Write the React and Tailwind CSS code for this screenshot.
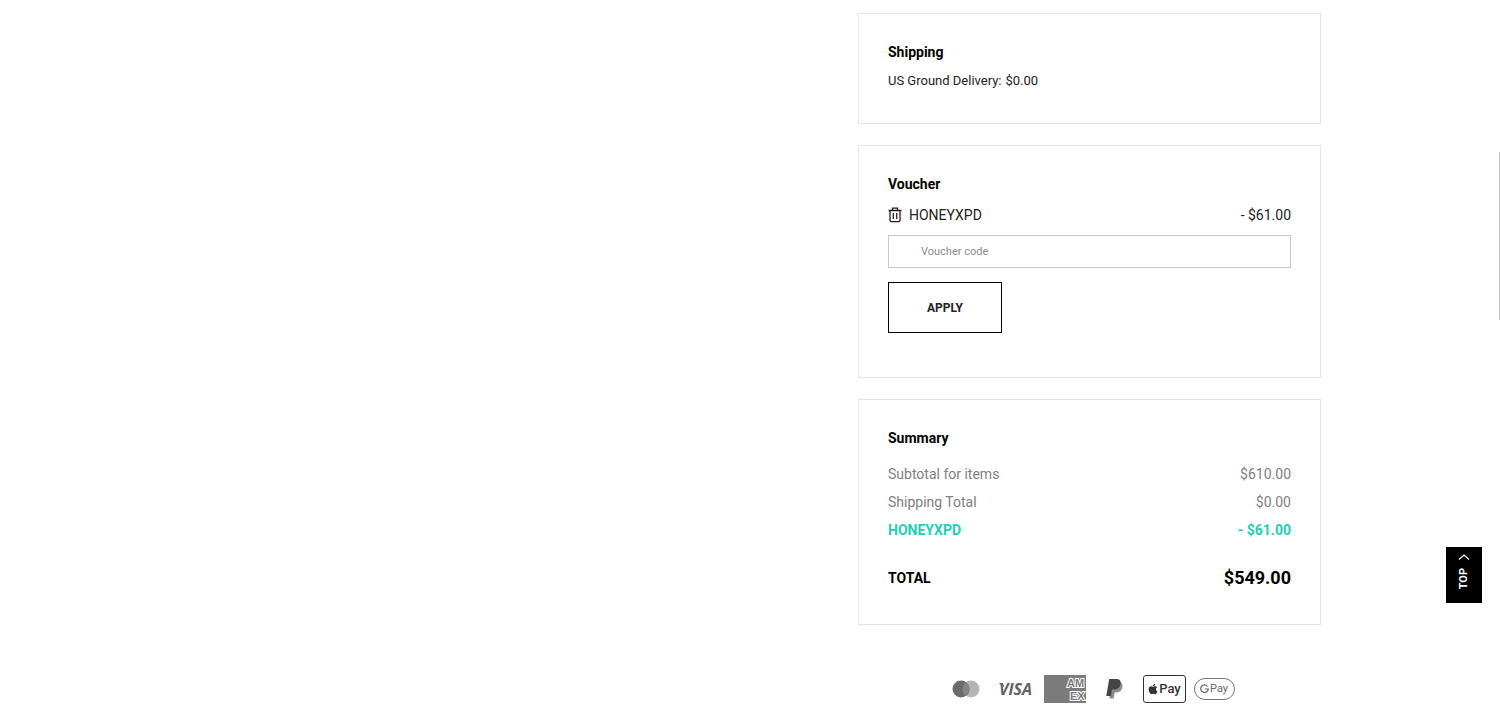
import React, { useState } from 'react';
import { FaApple } from 'react-icons/fa';

const totals = [
    { label: 'Subtotal for items', value: '$610.00' },
    { label: 'Shipping Total', value: '$0.00' },
];

function Card({ title, className = '', children }) {
    return (
        <section className={`border border-[#e5e5e5] px-[29px] pt-7 ${className}`}>
            <h2 className="text-sm leading-5 font-bold text-black">{title}</h2>
            {children}
        </section>
    );
}

function TrashIcon() {
    return (
        <svg width="14" height="16" viewBox="0 0 14 16" fill="none" stroke="#2b1a1e" strokeWidth="1.3">
            <path d="M0.5 3.5h13M4.5 3.3V1.2h5v2.1M2 3.7v9.6q0 1.4 1.4 1.4h7.2q1.4 0 1.4-1.4V3.7" />
            <path d="M5.3 6v6M8.7 6v6" />
        </svg>
    );
}

function PaymentMethods() {
    return (
        <ul className="flex items-center justify-center mt-[49px] pl-[7px]">
            <li>
                <svg role="img" aria-label="Mastercard" width="28" height="30" viewBox="0 0 28 30">
                    <circle cx="19" cy="15" r="8.5" fill="#b5b5b5" />
                    <circle cx="9" cy="15" r="8.5" fill="#6b6b6b" />
                    <path d="M14 8.1a8.5 8.5 0 0 1 0 13.8a8.5 8.5 0 0 1 0-13.8z" fill="#858585" />
                </svg>
            </li>
            <li className="ml-4">
                <svg width="40" height="30" viewBox="0 0 40 30">
                    <text x="3" y="21" fontFamily="Open Sans, sans-serif" fontSize="16" fontWeight="700" fontStyle="italic" fill="#626262">VISA</text>
                    <path d="M2 9.5h5l1.5 4Q6 10.6 2 9.5z" fill="#626262" />
                </svg>
            </li>
            <li className="ml-2">
                <svg width="42" height="28" viewBox="0 0 42 28">
                    <rect width="42" height="28" fill="#7b7b7b" />
                    <g fontFamily="Liberation Sans, sans-serif" fontWeight="700" fontSize="11" fill="#7b7b7b" stroke="#fff" strokeWidth="2" paintOrder="stroke">
                        <text x="23" y="12">AM</text>
                        <text x="26" y="25">EX</text>
                    </g>
                </svg>
            </li>
            <li className="ml-5">
                <svg role="img" aria-label="PayPal" width="17" height="22" viewBox="0 0 17 22">
                    <path d="M6 4h8.3c2.2 1.2 2.6 3.3 1.9 5.9-.8 3-3.2 4.5-6.4 4.5H8.6l-1 6H3.4z" fill="#8c8c8c" />
                    <path d="M3.2 1h6.9c4 0 5.2 2.2 4.4 5.5-.8 3.6-3.2 5-6.6 5H6L4.9 18H.3z" fill="#454545" />
                </svg>
            </li>
            <li className="ml-5 flex h-7 w-[43px] items-center justify-center rounded-[3px] border border-[#333] text-[#333]">
                <FaApple className="size-3" />
                <span className="text-[13px] leading-4 font-medium">Pay</span>
            </li>
            <li className="ml-2 flex h-[22px] w-[41px] items-center justify-center gap-px rounded-full border border-[#777] text-[#666]">
                <svg width="9" height="10" viewBox="0 0 9 10" fill="none" stroke="currentColor" strokeWidth="1.2">
                    <path d="M7.5 2.3A3.8 3.8 0 1 0 8.3 5H4.7" />
                </svg>
                <span className="text-[11px] leading-4">Pay</span>
            </li>
        </ul>
    );
}

export default function App() {
    const [code, setCode] = useState('');

    return (
        <div className="bg-white px-4 font-[Roboto,sans-serif] text-[#222]">
            <main className="mx-auto grid max-w-[1142px] pt-[13px] md:grid-cols-[679fr_463fr]">
                <div className="flex flex-col md:col-start-2">
                    <div className="flex flex-col gap-[21px]">
                        <Card title="Shipping" className="pb-8">
                            <p className="mt-[9px] flex gap-1 text-[13px] leading-5">
                                <span>US Ground Delivery:</span>
                                <span>$0.00</span>
                            </p>
                        </Card>

                        <Card title="Voucher" className="pb-11">
                            <div className="mt-[9px] flex items-center justify-between text-sm leading-6">
                                <div className="flex items-center gap-[7px]">
                                    <button type="button" aria-label="Remove voucher">
                                        <TrashIcon />
                                    </button>
                                    <span>HONEYXPD</span>
                                </div>
                                <span>- $61.00</span>
                            </div>
                            <form onSubmit={(e) => e.preventDefault()}>
                                <input
                                    type="text"
                                    aria-label="Voucher code"
                                    value={code}
                                    onChange={(e) => setCode(e.target.value)}
                                    placeholder="Voucher code"
                                    className="mt-2 block h-[33px] w-full border border-[#c8c8c8] px-8 text-[11px] placeholder:text-[#8c8c8c]"
                                />
                                <button
                                    type="submit"
                                    className="mt-[14px] block h-[51px] w-[114px] border border-black text-xs font-bold"
                                >
                                    APPLY
                                </button>
                            </form>
                        </Card>

                        <Card title="Summary" className="pb-8">
                            <dl className="mt-3 text-sm leading-7">
                                {totals.map((row) => (
                                    <div key={row.label} className="flex justify-between text-[#808080]">
                                        <dt>{row.label}</dt>
                                        <dd>{row.value}</dd>
                                    </div>
                                ))}
                                <div className="flex justify-between font-bold text-[#1fcfb4]">
                                    <dt>HONEYXPD</dt>
                                    <dd>- $61.00</dd>
                                </div>
                                <div className="mt-5 flex items-center justify-between font-bold text-black">
                                    <dt>TOTAL</dt>
                                    <dd className="text-lg leading-7">$549.00</dd>
                                </div>
                            </dl>
                        </Card>
                    </div>
                    <PaymentMethods />
                </div>
            </main>

            <a
                href="#root"
                className="fixed right-[18px] bottom-[104px] flex h-14 w-9 flex-col items-center gap-2 bg-black pt-[7px] text-white"
            >
                <svg width="12" height="6" viewBox="0 0 12 6" fill="none" stroke="currentColor" strokeWidth="1.2">
                    <path d="M1 5.5l5-4.5 5 4.5" />
                </svg>
                <span className="rotate-180 text-[11px] leading-4 font-bold [writing-mode:vertical-rl]">TOP</span>
            </a>
            <div className="fixed top-[152px] right-0 h-[168px] w-px bg-[#c1c1c1]" />
        </div>
    );
}
